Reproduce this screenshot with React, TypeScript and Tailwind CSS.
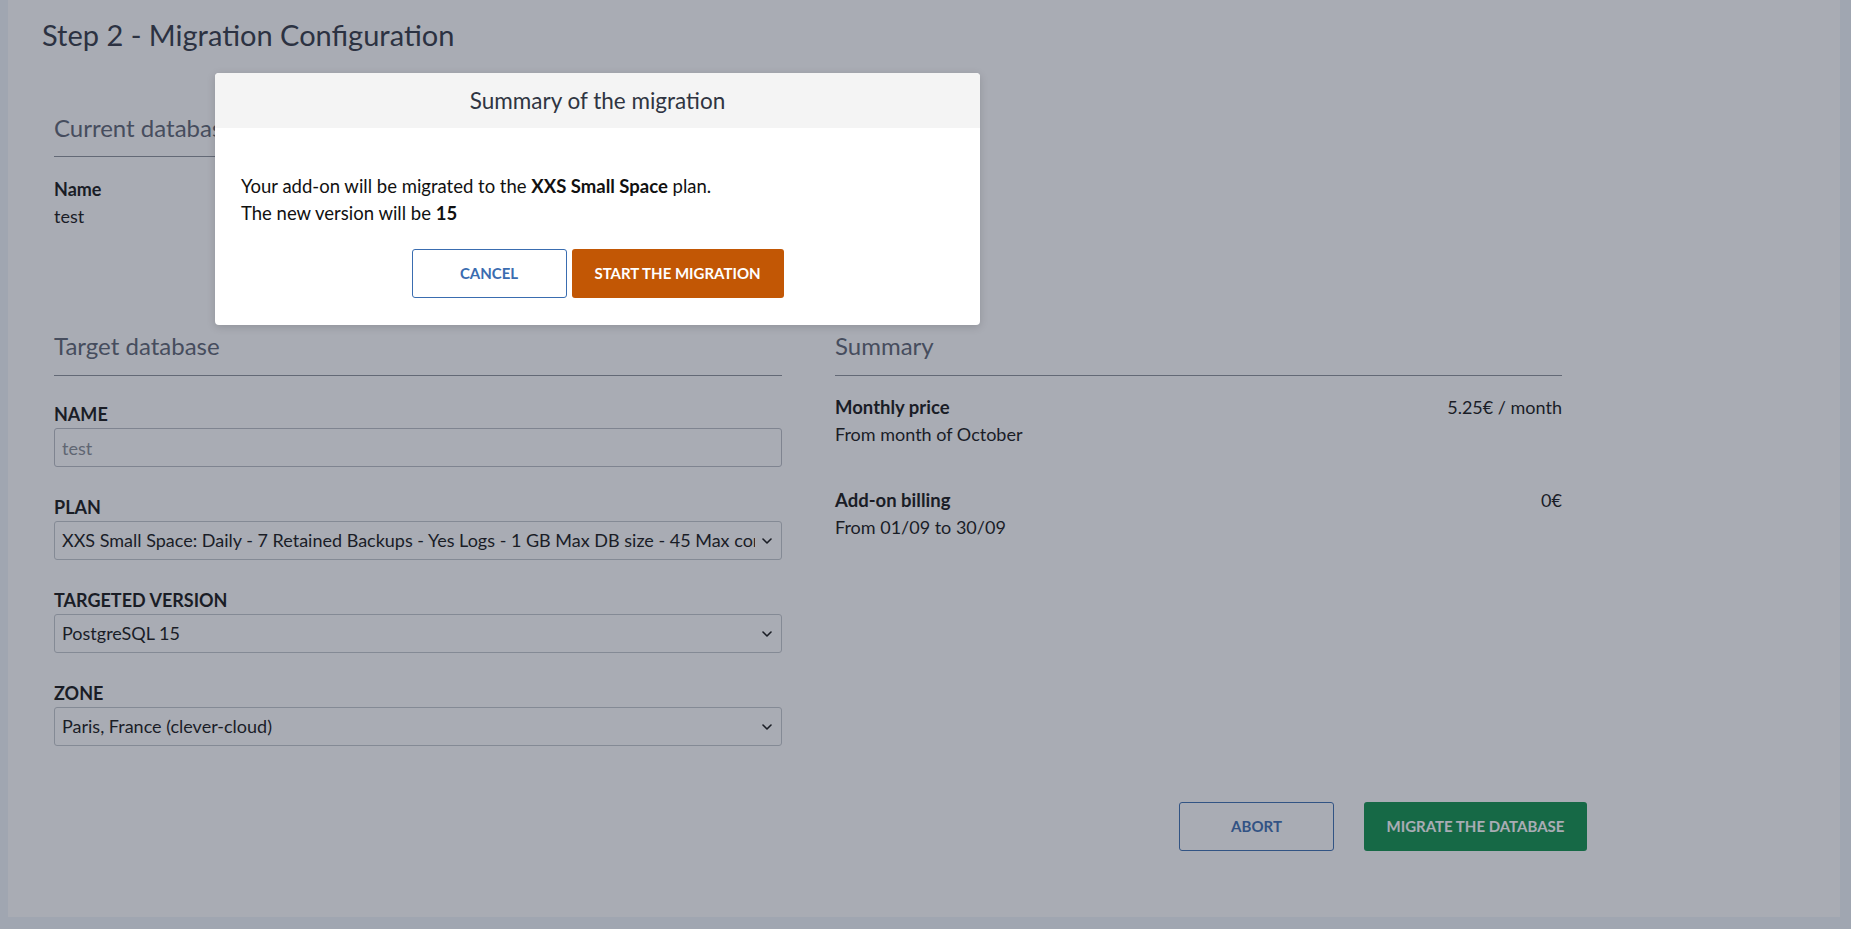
import React from "react";

const font = { fontFamily: "Lato, 'Noto Sans', sans-serif" };

function Chevron() {
  return (
    <svg width="10" height="6" viewBox="0 0 10 6" className="absolute right-[10px] top-1/2 -translate-y-1/2 pointer-events-none">
      <path d="M1 1l4 4 4-4" fill="none" stroke="#111" strokeWidth="1.6" strokeLinecap="round" strokeLinejoin="round" />
    </svg>
  );
}

function Field({ label, children }: { label: string; children: React.ReactNode }) {
  return (
    <div className="mb-[27px]">
      <div className="text-[18px] leading-[27px] font-bold text-[#111]">{label}</div>
      <div>{children}</div>
    </div>
  );
}

function Select({ value }: { value: string }) {
  return (
    <div className="relative">
      <select className="w-full h-[39px] appearance-none rounded-[3px] border border-[#c2c6cc] bg-white pl-[7px] pr-[26px] text-[18px] text-[#111] outline-none">
        <option>{value}</option>
      </select>
      <Chevron />
    </div>
  );
}

export default function App() {
  return (
    <div className="w-[1857px] h-[932px] bg-white overflow-hidden" style={font}>
      <div className="relative w-[1851px] h-[929px] bg-[#f0f6fa] pl-[8px] pr-[11px] pb-[12px]">

        {/* Card */}
        <div className="w-[1832px] h-[917px] bg-white">
          <h1 className="pl-[34px] pt-[17px] text-[29px] leading-[36px] text-[#2f3542]">
            Step 2 - Migration Configuration
          </h1>

          <div className="pl-[46px]">

            {/* Current database */}
            <div className="w-[728px] mt-[60px]">
              <h2 className="text-[24px] leading-[30px] text-[#5b6270] pb-[13px] border-b border-[#8a8f98]">
                Current database
              </h2>
              <div className="mt-[19px] flex gap-[120px] text-[18px] leading-[27px] text-[#111]">
                <div>
                  <div className="font-bold">Name</div>
                  <div>test</div>
                </div>
                <div>
                  <div className="font-bold">Plan</div>
                  <div>XXS Small Space</div>
                </div>
                <div>
                  <div className="font-bold">Version</div>
                  <div>PostgreSQL 11</div>
                </div>
              </div>
            </div>

            {/* Target + Summary */}
            <div className="mt-[101px] grid grid-cols-[728px_727px] gap-x-[53px]">
              <div>
                <h2 className="text-[24px] leading-[30px] text-[#5b6270] pb-[14px] border-b border-[#8a8f98]">
                  Target database
                </h2>
                <div className="mt-[25px]">
                  <Field label="NAME">
                    <input
                      disabled
                      value="test"
                      readOnly
                      className="w-full h-[39px] rounded-[3px] border border-[#b9bdc4] bg-white pl-[7px] text-[18px] text-[#858a92]"
                    />
                  </Field>
                  <Field label="PLAN">
                    <Select value="XXS Small Space: Daily - 7 Retained Backups - Yes Logs - 1 GB Max DB size - 45 Max connections" />
                  </Field>
                  <Field label="TARGETED VERSION">
                    <Select value="PostgreSQL 15" />
                  </Field>
                  <Field label="ZONE">
                    <Select value="Paris, France (clever-cloud)" />
                  </Field>
                </div>
              </div>

              <div>
                <h2 className="text-[24px] leading-[30px] text-[#5b6270] pb-[14px] border-b border-[#8a8f98]">
                  Summary
                </h2>
                <div className="mt-[18px] flex justify-between text-[18px] leading-[27px] text-[#111]">
                  <div>
                    <div className="font-bold text-[18.5px]">Monthly price</div>
                    <div>From month of October</div>
                  </div>
                  <div>5.25€ / month</div>
                </div>
                <div className="mt-[39px] flex justify-between text-[18px] leading-[27px] text-[#111]">
                  <div>
                    <div className="font-bold text-[18.5px]">Add-on billing</div>
                    <div>From 01/09 to 30/09</div>
                  </div>
                  <div>0€</div>
                </div>
              </div>
            </div>

            {/* Actions */}
            <div className="mt-[29px] pl-[1125px] flex gap-[30px]">
              <button className="w-[155px] h-[49px] rounded-[3px] border border-[#3a6db0] bg-white text-[15px] font-bold text-[#3a6cb0]">
                ABORT
              </button>
              <button className="w-[223px] h-[49px] rounded-[3px] bg-[#0b9049] text-[15px] font-bold text-white">
                MIGRATE THE DATABASE
              </button>
            </div>
          </div>
        </div>

        {/* Backdrop */}
        <div className="absolute inset-0 bg-[rgba(40,48,68,0.4)]" />

        {/* Modal */}
        <div className="absolute left-[215px] top-[73px] w-[765px] rounded-[4px] bg-white shadow-[0_2px_8px_rgba(0,0,0,0.15)] overflow-hidden">
          <div className="h-[55px] bg-[#f4f4f4] flex items-center justify-center text-[22.5px] text-[#2f3542]">
            Summary of the migration
          </div>
          <div className="px-[26px] pt-[45px] pb-[27px]">
            <p className="text-[18.5px] leading-[27px] text-[#111]">
              Your add-on will be migrated to the <b>XXS Small Space</b> plan.
            </p>
            <p className="text-[18.5px] leading-[27px] text-[#111]">
              The new version will be <b>15</b>
            </p>
            <div className="mt-[22px] flex justify-center gap-[5px]">
              <button className="w-[155px] h-[49px] rounded-[3px] border border-[#3a6db0] bg-white text-[15px] font-bold text-[#3a6cb0]">
                CANCEL
              </button>
              <button className="w-[212px] h-[49px] rounded-[3px] bg-[#c25705] text-[15px] font-bold text-white">
                START THE MIGRATION
              </button>
            </div>
          </div>
        </div>
      </div>
    </div>
  );
}
